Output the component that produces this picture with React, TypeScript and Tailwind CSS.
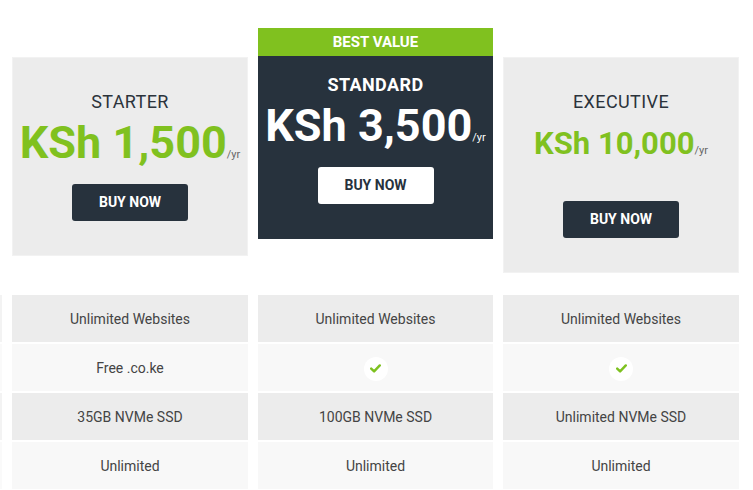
import React from 'react'

type Plan = {
  name: string
  price: string
  featured?: boolean
  features: (string | true)[]
}

const plans: Plan[] = [
  { name: 'STARTER', price: 'KSh 1,500', features: ['Unlimited Websites', 'Free .co.ke', '35GB NVMe SSD', 'Unlimited'] },
  { name: 'STANDARD', price: 'KSh 3,500', featured: true, features: ['Unlimited Websites', true, '100GB NVMe SSD', 'Unlimited'] },
  { name: 'EXECUTIVE', price: 'KSh 10,000', features: ['Unlimited Websites', true, 'Unlimited NVMe SSD', 'Unlimited'] },
]

const Check = () => (
  <span className="flex h-[24px] w-[24px] items-center justify-center rounded-full bg-white">
    <svg width="11" height="9" viewBox="0 0 11 9" fill="none">
      <path d="M1.2 4.6 4.1 7.4 9.8 1.4" stroke="#7dc11f" strokeWidth="2.4" strokeLinecap="round" strokeLinejoin="round" />
    </svg>
  </span>
)

const BuyButton: React.FC<{ light?: boolean }> = ({ light }) => (
  <button
    className={`h-[37px] w-[116px] rounded-[3px] text-[14px] font-bold ${
      light ? 'bg-white text-[#27323d]' : 'bg-[#27323d] text-white'
    }`}
  >
    BUY NOW
  </button>
)

const Header: React.FC<{ plan: Plan }> = ({ plan }) => {
  if (plan.featured) {
    return (
      <div className="flex flex-col">
        <div className="flex h-[28px] items-center justify-center bg-[#80c11f] text-[15px] font-bold text-white">
          BEST VALUE
        </div>
        <div className="flex flex-col items-center bg-[#27323d] pt-[19px] pb-[35px]">
          <p className="text-[18px] leading-[20px] font-bold tracking-[0.4px] text-white">{plan.name}</p>
          <div className="mt-[10px] flex items-baseline">
            <span className="text-[45px] leading-[42px] font-bold text-white">{plan.price}</span>
            <span className="text-[11px] text-white">/yr</span>
          </div>
          <div className="mt-[20px]">
            <BuyButton light />
          </div>
        </div>
      </div>
    )
  }

  const big = plan.name === 'STARTER'
  return (
    <div className="mt-[29px] flex flex-col items-center border border-[#f2f2f2] bg-[#ececec] pt-[34px] pb-[34px]">
      <p className="text-[18px] leading-[20px] font-normal tracking-[0.4px] text-[#2b333b]">{plan.name}</p>
      {big ? (
        <div className="mt-[10px] flex items-baseline">
          <span className="text-[45px] leading-[42px] font-bold text-[#80c11f]">{plan.price}</span>
          <span className="text-[11px] text-[#666]">/yr</span>
        </div>
      ) : (
        <div className="mt-[16px] flex items-baseline">
          <span className="text-[31px] leading-[32px] font-bold text-[#80c11f]">{plan.price}</span>
          <span className="text-[11px] text-[#666]">/yr</span>
        </div>
      )}
      <div className={big ? 'mt-[20px]' : 'mt-[41px]'}>
        <BuyButton />
      </div>
    </div>
  )
}

export default function App() {
  return (
    <div className="h-[490px] w-[753px] overflow-hidden bg-white font-['Roboto',sans-serif]">
      <div className="grid h-[295px] grid-cols-[2px_236px_235px_236px] items-start gap-x-[10px] pt-[28px]">
        <div />
        {plans.map((p) => (
          <Header key={p.name} plan={p} />
        ))}
      </div>
      <div className="grid grid-cols-[2px_236px_235px_236px] gap-x-[10px]">
        <div className="flex flex-col gap-[2px]">
          {[0, 1, 2, 3].map((i) => (
            <div key={i} className={`h-[47px] ${i % 2 === 0 ? 'bg-[#f3f3f3]' : 'bg-[#fafafa]'}`} />
          ))}
        </div>
        {plans.map((p) => (
          <div key={p.name} className="flex flex-col gap-[2px]">
            {p.features.map((f, i) => (
              <div
                key={i}
                className={`flex h-[47px] items-center justify-center pt-[2px] text-[14px] text-[#444] ${
                  i % 2 === 0 ? 'bg-[#ececec]' : 'bg-[#f8f8f8]'
                }`}
              >
                {f === true ? <Check /> : f}
              </div>
            ))}
          </div>
        ))}
      </div>
    </div>
  )
}
